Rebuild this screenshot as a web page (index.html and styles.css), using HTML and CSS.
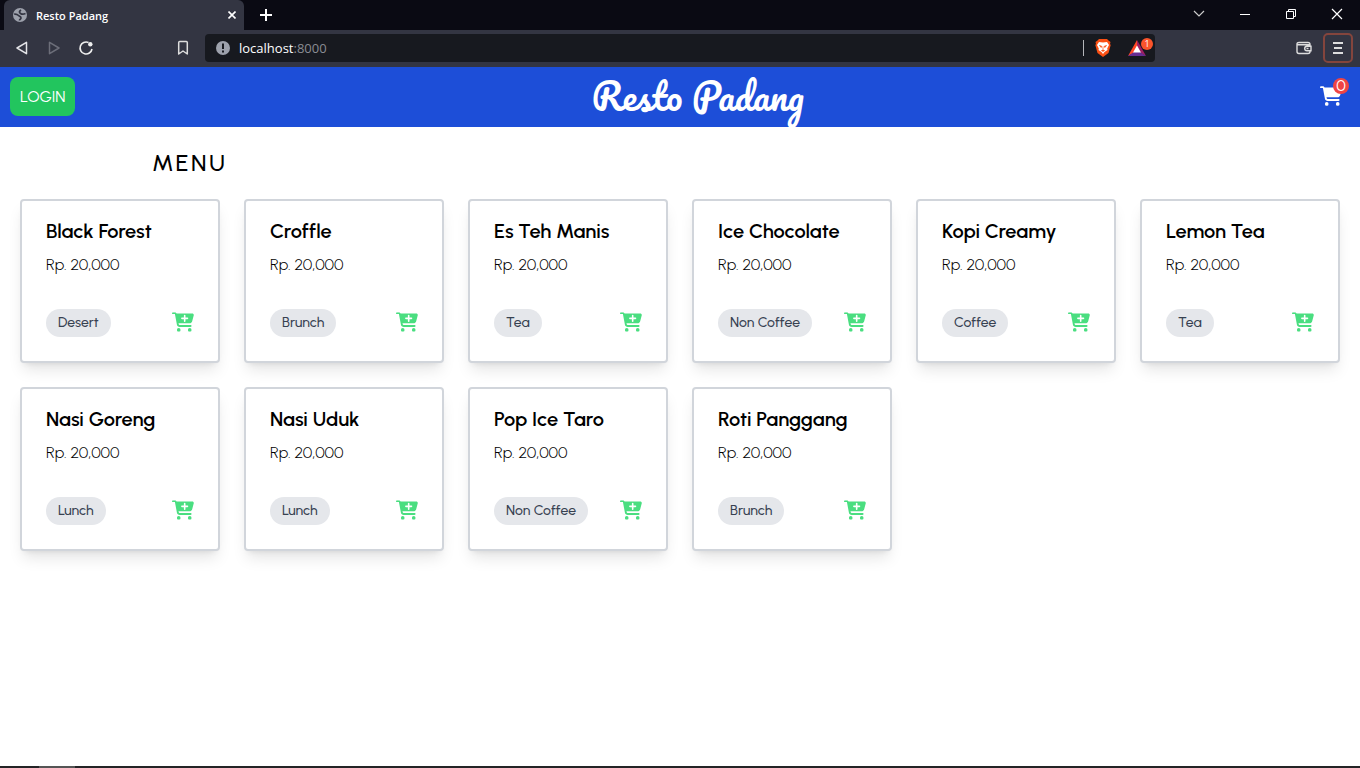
FILE: index.html
```html
<!DOCTYPE html>
<html lang="id">
<head>
<meta charset="utf-8">
<title>Resto Padang</title>
<link rel="stylesheet" href="styles.css">
</head>
<body>
<svg class="defs" aria-hidden="true">
  <symbol id="cart" viewBox="0 0 576 512"><path d="M0 24C0 10.700 10.700 0 24 0H69.500c22 0 41.500 12.800 50.600 32h411c26.300 0 45.500 25 38.600 50.400l-41 152.300c-8.500 31.400-37 53.300-69.500 53.300H170.700l5.400 28.500c2.200 11.300 12.100 19.500 23.600 19.500H488c13.300 0 24 10.700 24 24s-10.700 24-24 24H199.700c-34.600 0-64.300-24.600-70.700-58.500L77.400 54.500c-.7-3.800-4-6.500-7.900-6.500H24C10.700 48 0 37.300 0 24zM128 464a48 48 0 1 1 96 0 48 48 0 1 1-96 0zm336-48a48 48 0 1 1 0 96 48 48 0 1 1 0-96z"/></symbol>
  <symbol id="cart-plus" viewBox="0 0 576 512"><use href="#cart"/><path d="M332 86v148M258 160h148" stroke="#fff" stroke-width="42" stroke-linecap="round"/></symbol>
</svg>

<div class="tabs">
  <div class="tab">
    <svg width="14" height="14" viewBox="0 0 14 14"><circle cx="7" cy="7" r="7" fill="#9da1ac"/><path d="M1.200 6.200C3 6 4.500 6.500 5.500 7.500S8 8.500 8 10 6.500 11 6.500 12.500M12.500 5.500C10.500 6.500 9 6.500 7.500 5.500S6 3.500 8 2" fill="none" stroke="#333542" stroke-width="1.700"/></svg>
    <span class="tab-title">Resto Padang</span>
    <button class="tab-close" aria-label="Close tab"><svg width="8" height="8" viewBox="0 0 8 8"><path d="M.5.5l7 7m0-7l-7 7" stroke="#fff" stroke-width="1.600"/></svg></button>
  </div>
  <button class="new-tab" aria-label="New tab"><svg width="12" height="12" viewBox="0 0 12 12"><path d="M6 0v12M0 6h12" stroke="#fff" stroke-width="2"/></svg></button>
  <div class="window-controls">
    <button aria-label="Search tabs"><svg width="12" height="12" viewBox="0 0 12 12"><path d="M1 3l5 5 5-5" fill="none" stroke="#ccc" stroke-width="1.200"/></svg></button>
    <button aria-label="Minimize"><svg width="12" height="12" viewBox="0 0 12 12"><path d="M1 6.500h10" stroke="#fff"/></svg></button>
    <button aria-label="Restore"><svg width="12" height="12" viewBox="0 0 12 12"><path d="M1.500 3.500h7v7h-7zM3.500 3.500v-2h7v7h-2" fill="none" stroke="#fff"/></svg></button>
    <button aria-label="Close"><svg width="12" height="12" viewBox="0 0 12 12"><path d="M1 1l10 10m0-10L1 11" stroke="#fff" stroke-width="1.200"/></svg></button>
  </div>
</div>

<div class="toolbar">
  <div class="nav">
    <button aria-label="Back"><svg width="16" height="16" viewBox="0 0 16 16"><path d="M12.500 2.300v11.400L3 8z" fill="none" stroke="#e4e4e8" stroke-width="1.500" stroke-linejoin="round"/></svg></button>
    <button aria-label="Forward"><svg width="16" height="16" viewBox="0 0 16 16"><path d="M3.500 2.300v11.400L13 8z" fill="none" stroke="#6c6e79" stroke-width="1.500" stroke-linejoin="round"/></svg></button>
    <button aria-label="Reload"><svg width="16" height="16" viewBox="0 0 16 16"><path d="M10.500 2.500A6 6 0 1 0 14 9" fill="none" stroke="#eee" stroke-width="1.600"/><circle cx="12.300" cy="4.300" r="2.200" fill="#eee"/></svg></button>
    <button class="bookmark" aria-label="Bookmark"><svg width="16" height="16" viewBox="0 0 16 16"><path d="M3.700 2.500q0-1 1-1h6.600q1 0 1 1V14L8 11l-4.300 3z" fill="none" stroke="#ddd" stroke-width="1.500" stroke-linejoin="round"/></svg></button>
  </div>
  <div class="address">
    <svg width="14" height="14" viewBox="0 0 14 14"><circle cx="7" cy="7" r="7" fill="#9da1ac"/><path d="M7 2.500v5.500M7 9.500v2" stroke="#17191f" stroke-width="2"/></svg>
    <span class="url">localhost<span class="port">:8000</span></span>
    <span class="divider"></span>
    <button class="shield" aria-label="Brave Shields"><svg width="16" height="18" viewBox="0 0 16 18"><path d="M4 0h8l1.500 1.500L15.500 3l-.5 2 .7 1-2.200 8L8 18l-5.500-4L.3 6 1 5l-.5-2 2-1.500z" fill="#fb5014"/><path d="M4 3l4 .6L12 3l2 3-1.800 3.500.3 1.500L9.500 13 8 15l-1.500-2-3-2 .3-1.500L2 6z" fill="#fff"/><path d="M4.500 6.500l2.300.8-.6 1.200zM11.500 6.500l-2.300.8.6 1.200zM8 7.500v2.500M6.500 11.500L8 10.700l1.500.8-1.500 1z" fill="#fb5014" stroke="#fb5014" stroke-width=".7"/></svg></button>
    <button class="rewards" aria-label="Brave Rewards"><svg width="18" height="16" viewBox="0 0 18 16"><path d="M9 0L0 16l9-5z" fill="#ff4724"/><path d="M9 0l9 16-9-5z" fill="#9e1f63"/><path d="M0 16h18l-9-6z" fill="#662d91"/><path d="M9 5.500L5 12.500h8z" fill="#fff"/></svg><span class="reward-count">1</span></button>
  </div>
  <button class="wallet" aria-label="Wallet"><svg width="16" height="14" viewBox="0 0 16 14"><path d="M14 5V3.500q0-2-2-2H3Q1 1.500 1 3v7.500q0 2 2 2h9q2 0 2-2M1.500 3.700h12M15 5.200h-4a2.300 2.300 0 0 0 0 4.600h4zM10.500 7.500h2" fill="none" stroke="#ddd" stroke-width="1.400"/></svg></button>
  <button class="main-menu" aria-label="Menu"><svg width="10" height="12" viewBox="0 0 10 12"><path d="M0 1h10M1 6h8M0 11h10" stroke="#ddd" stroke-width="2"/></svg></button>
</div>

<header class="header">
  <button class="login">LOGIN</button>
  <h1 class="brand">Resto Padang</h1>
  <a class="cart-link" href="#" aria-label="Cart"><svg class="cart-icon"><use href="#cart"/></svg><span class="cart-count">0</span></a>
</header>

<main class="main">
  <h2 class="heading">MENU</h2>
  <div class="grid">
    <article class="card"><h3 class="name">Black Forest</h3><p class="price">Rp. 20,000</p><div class="card-foot"><span class="tag">Desert</span><button class="add" aria-label="Add Black Forest"><svg class="cart-icon"><use href="#cart-plus"/></svg></button></div></article>
    <article class="card"><h3 class="name">Croffle</h3><p class="price">Rp. 20,000</p><div class="card-foot"><span class="tag">Brunch</span><button class="add" aria-label="Add Croffle"><svg class="cart-icon"><use href="#cart-plus"/></svg></button></div></article>
    <article class="card"><h3 class="name">Es Teh Manis</h3><p class="price">Rp. 20,000</p><div class="card-foot"><span class="tag">Tea</span><button class="add" aria-label="Add Es Teh Manis"><svg class="cart-icon"><use href="#cart-plus"/></svg></button></div></article>
    <article class="card"><h3 class="name">Ice Chocolate</h3><p class="price">Rp. 20,000</p><div class="card-foot"><span class="tag">Non Coffee</span><button class="add" aria-label="Add Ice Chocolate"><svg class="cart-icon"><use href="#cart-plus"/></svg></button></div></article>
    <article class="card"><h3 class="name">Kopi Creamy</h3><p class="price">Rp. 20,000</p><div class="card-foot"><span class="tag">Coffee</span><button class="add" aria-label="Add Kopi Creamy"><svg class="cart-icon"><use href="#cart-plus"/></svg></button></div></article>
    <article class="card"><h3 class="name">Lemon Tea</h3><p class="price">Rp. 20,000</p><div class="card-foot"><span class="tag">Tea</span><button class="add" aria-label="Add Lemon Tea"><svg class="cart-icon"><use href="#cart-plus"/></svg></button></div></article>
    <article class="card"><h3 class="name">Nasi Goreng</h3><p class="price">Rp. 20,000</p><div class="card-foot"><span class="tag">Lunch</span><button class="add" aria-label="Add Nasi Goreng"><svg class="cart-icon"><use href="#cart-plus"/></svg></button></div></article>
    <article class="card"><h3 class="name">Nasi Uduk</h3><p class="price">Rp. 20,000</p><div class="card-foot"><span class="tag">Lunch</span><button class="add" aria-label="Add Nasi Uduk"><svg class="cart-icon"><use href="#cart-plus"/></svg></button></div></article>
    <article class="card"><h3 class="name">Pop Ice Taro</h3><p class="price">Rp. 20,000</p><div class="card-foot"><span class="tag">Non Coffee</span><button class="add" aria-label="Add Pop Ice Taro"><svg class="cart-icon"><use href="#cart-plus"/></svg></button></div></article>
    <article class="card"><h3 class="name">Roti Panggang</h3><p class="price">Rp. 20,000</p><div class="card-foot"><span class="tag">Brunch</span><button class="add" aria-label="Add Roti Panggang"><svg class="cart-icon"><use href="#cart-plus"/></svg></button></div></article>
  </div>
</main>
<div class="taskbar"><span class="task"></span></div>
</body>
</html>
```
FILE: styles.css
```css
* { box-sizing: border-box; margin: 0; }
body {
  min-height: 100vh;
  display: flex;
  flex-direction: column;
  background: #fff;
  color: #000;
  font-family: Urbanist, Lato, sans-serif;
}
button { border: 0; padding: 0; background: none; color: inherit; font: inherit; }
svg { display: block; flex: none; }
.defs { width: 0; height: 0; position: absolute; }

/* Browser frame */
.tabs, .toolbar { display: flex; align-items: center; font-family: "Open Sans", sans-serif; color: #fff; }
.tabs { height: 30px; padding: 0 0 2px 4px; background: #0a0a13; }
.tab {
  align-self: flex-start;
  width: 240px;
  height: 30px;
  padding: 0 8px 0 9px;
  display: flex;
  align-items: center;
  gap: 9px;
  border-radius: 6px 6px 0 0;
  background: #333542;
}
.tab-title { flex: 1; font-size: 11px; font-weight: 600; }
.new-tab { margin: 2px 0 0 16px; }
.window-controls { margin-left: auto; padding-right: 17px; display: flex; gap: 34px; }
.toolbar { height: 37px; padding: 0 7px 2px 0; background: #333542; }
.nav { width: 205px; padding: 0 14px; display: flex; gap: 16px; }
.bookmark { margin-left: auto; }
.address {
  flex: 1;
  height: 28px;
  padding: 0 2px 0 11px;
  display: flex;
  align-items: center;
  border-radius: 4px;
  background: #17191f;
}
.url { flex: 1; margin-left: 9px; font-size: 13px; }
.port { color: #8a8c93; }
.divider { width: 1px; height: 16px; background: #b5b6ba; }
.shield { margin-left: 11px; }
.rewards { position: relative; width: 25px; margin-left: 17px; }
.reward-count {
  position: absolute;
  top: -2px;
  right: 0;
  width: 12px;
  height: 12px;
  border-radius: 50%;
  background: #fb542b;
  font-size: 9px;
  line-height: 12px;
  text-align: center;
}
.wallet { margin-left: 141px; }
.main-menu {
  width: 30px;
  height: 30px;
  margin-left: 11px;
  display: flex;
  align-items: center;
  justify-content: center;
  border: 2px solid #84453d;
  border-radius: 5px;
}

/* Site header */
.header {
  height: 60px;
  padding: 0 10px 2px;
  display: flex;
  align-items: center;
  justify-content: space-between;
  background: #1d4ed8;
  color: #fff;
}
.login { height: 39px; padding: 0 10px; border-radius: 8px; background: #22c55e; font-size: 16px; }
.brand { font: 400 36px/60px Pacifico, Lato, cursive; }
.cart-link { position: relative; width: 30px; color: inherit; }
.cart-icon { width: 22px; height: 20px; fill: currentColor; }
.cart-count {
  position: absolute;
  top: -8px;
  right: 1px;
  width: 16px;
  height: 16px;
  border-radius: 50%;
  background: #ef4444;
  font-size: 16px;
  line-height: 16px;
  text-align: center;
}

/* Menu */
.main { flex: 1; padding: 20px 20px 24px; }
.heading { padding-left: 132px; font-size: 24px; line-height: 32px; font-weight: 500; letter-spacing: .1em; }
.grid { margin-top: 20px; display: grid; grid-template-columns: repeat(6, minmax(0, 1fr)); gap: 24px; }
.card {
  padding: 16px 24px 24px;
  border: 2px solid #d1d5db;
  border-radius: 4px;
  background: #fff;
  box-shadow: 0 10px 15px -3px rgba(0, 0, 0, .1), 0 4px 6px -4px rgba(0, 0, 0, .1);
}
.name { font-size: 20px; line-height: 28px; font-weight: 600; white-space: nowrap; }
.price { margin-top: 8px; font-size: 16px; line-height: 24px; font-weight: 300; }
.card-foot { margin-top: 32px; display: flex; align-items: center; justify-content: space-between; }
.tag { padding: 0 12px; border-radius: 14px; background: #e5e7eb; color: #374151; font-size: 14px; line-height: 28px; font-weight: 500; }
.add { color: #4ade80; padding-bottom: 2px; }

.taskbar { height: 2px; padding-left: 39px; background: #242426; }
.task { display: block; width: 36px; height: 2px; background: #555; }
```
